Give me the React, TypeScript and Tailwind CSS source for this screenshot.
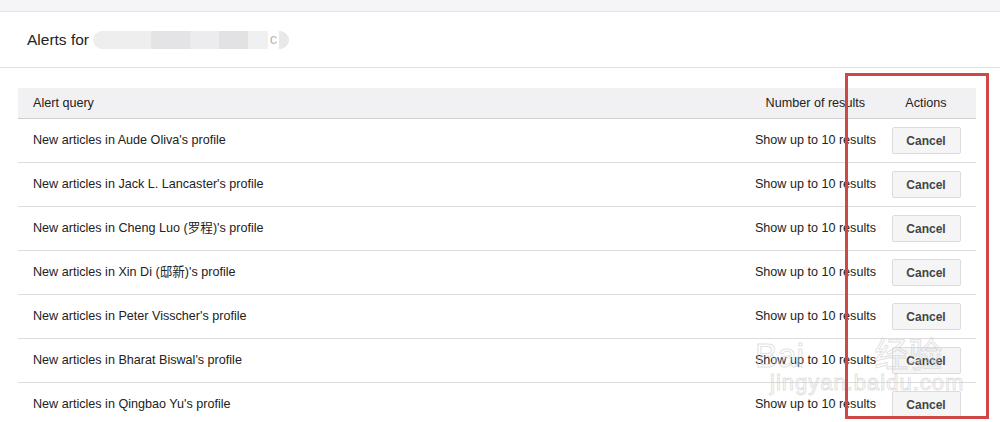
import React from 'react';

const alerts = [
  'Aude Oliva',
  'Jack L. Lancaster',
  'Cheng Luo (罗程)',
  'Xin Di (邸新)',
  'Peter Visscher',
  'Bharat Biswal',
  'Qingbao Yu',
];

const App = () => {
  return (
    <div className="relative h-[422px] w-[1000px] overflow-hidden bg-white font-['Liberation_Sans','Noto_Sans_CJK_SC',sans-serif] text-[#222]">
      <div className="h-[12px] border-b border-[#e3e3e3] bg-[#f5f4f6]"></div>

      <div className="flex h-[56px] items-center border-b border-[#e0e0e0] pl-[27px]">
        <span className="text-[15.5px] text-[#222]">Alerts for</span>
        <div className="ml-[4px] flex h-[20px] w-[196px] items-center">
          <div className="h-[18px] w-[60px] rounded-l-full bg-[#eeeeee]"></div>
          <div className="h-[18px] w-[40px] bg-[#e4e4e6]"></div>
          <div className="h-[18px] w-[30px] bg-[#ececee]"></div>
          <div className="h-[18px] w-[30px] bg-[#e2e2e4]"></div>
          <div className="h-[18px] w-[20px] bg-[#f0f0f0]"></div>
          <span className="ml-[2px] text-[15px] text-[#bbb]">c</span>
          <div className="ml-[2px] h-[18px] w-[10px] rounded-r-full bg-[#e8e8e8]"></div>
        </div>
      </div>

      <div className="ml-[18px] mt-[20px] w-[958px] text-[12.6px]">
        <div className="flex h-[31px] items-center border-b border-[#cfcfcf] bg-[#f1f0f2]">
          <div className="flex-1 pl-[15px]">Alert query</div>
          <div className="pr-[11px] text-right">Number of results</div>
          <div className="w-[100px] text-center">Actions</div>
        </div>
        {alerts.map((name) => (
          <div key={name} className="flex h-[44px] items-center border-b border-[#dcdcdc]">
            <div className="flex-1 pl-[15px]">New articles in {name}'s profile</div>
            <div className="text-right">Show up to 10 results</div>
            <div className="flex w-[100px] justify-center">
              <button className="h-[27px] w-[69px] rounded-[2px] border border-[#dcdcdc] bg-[#f5f5f5] text-[12px] font-bold text-[#444]">
                Cancel
              </button>
            </div>
          </div>
        ))}
      </div>

      <div className="pointer-events-none absolute left-[755px] top-[338px] flex items-end gap-[70px] text-[34px] leading-none text-transparent [-webkit-text-stroke:1px_rgba(205,205,205,0.6)]">
        <span>Bai</span>
        <span>经验</span>
      </div>
      <div className="pointer-events-none absolute left-[770px] top-[372px] text-[22px] leading-none tracking-[1px] text-transparent [-webkit-text-stroke:1px_rgba(205,205,205,0.6)]">
        jingyan.baidu.com
      </div>

      <div className="pointer-events-none absolute left-[845px] top-[73px] h-[346px] w-[144px] border-[3px] border-[#cf4747]"></div>
    </div>
  );
};

export default App;
